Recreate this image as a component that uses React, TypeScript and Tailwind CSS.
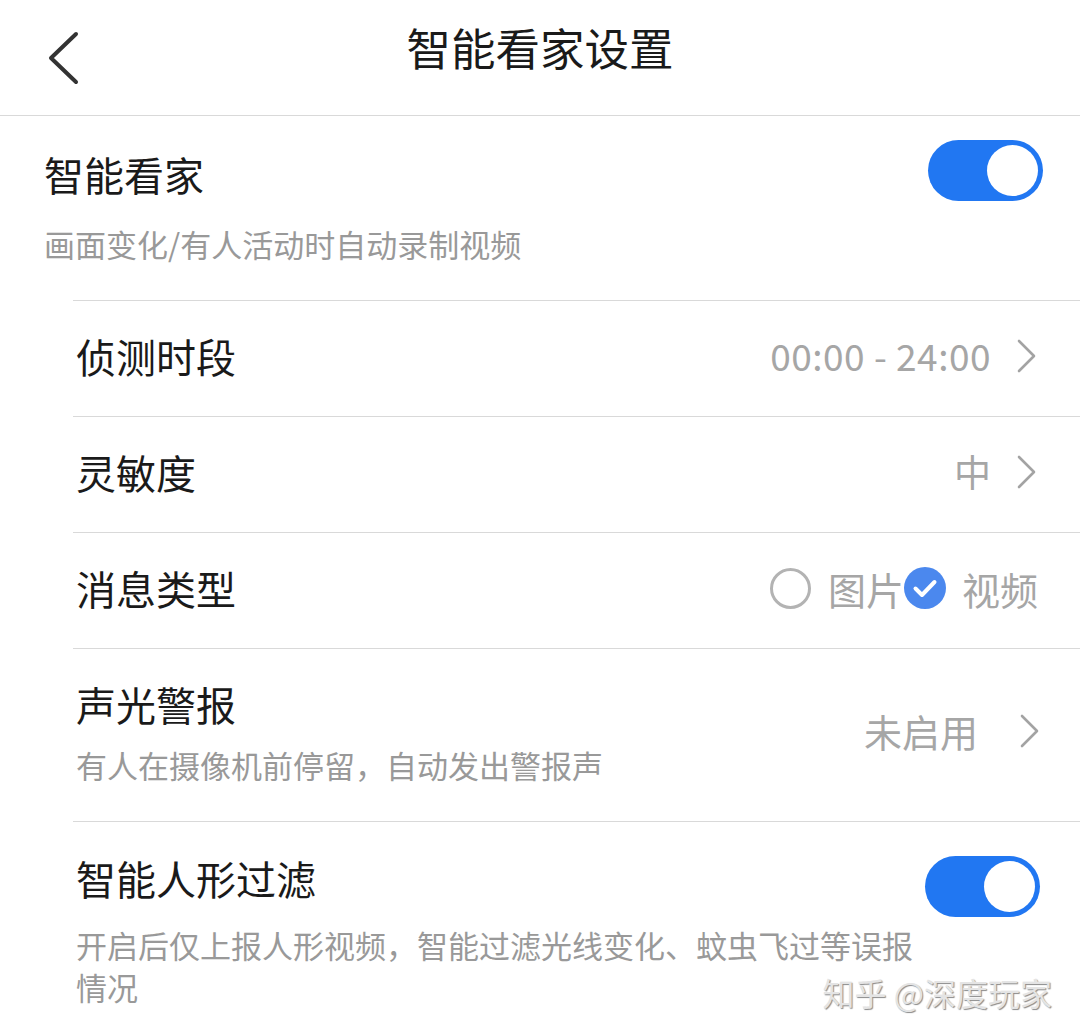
import React, { useState } from "react";

const FONT = '"Noto Sans CJK SC", "Noto Sans", sans-serif';

const Chevron: React.FC = () => (
  <svg width="20" height="34" viewBox="0 0 20 34" fill="none" className="shrink-0">
    <path d="M2 2 L17 17 L2 32" stroke="#a3a3a3" strokeWidth="2.6" strokeLinecap="round" strokeLinejoin="round" />
  </svg>
);

const Toggle: React.FC<{ on: boolean; onChange: () => void; className?: string }> = ({ on, onChange, className }) => (
  <button
    onClick={onChange}
    className={`w-[115px] h-[61px] rounded-full p-[5px] flex shrink-0 ${on ? "bg-[#2177f2] justify-end" : "bg-[#d9d9d9] justify-start"} ${className ?? ""}`}
  >
    <span className="w-[51px] h-[51px] rounded-full bg-white block" />
  </button>
);

const CheckedCircle: React.FC = () => (
  <svg width="42" height="42" viewBox="0 0 42 42" className="shrink-0">
    <circle cx="21" cy="21" r="21" fill="#4b88ee" />
    <path d="M11.5 21.5 L18 28 L30.5 15" stroke="#ffffff" strokeWidth="4" fill="none" strokeLinecap="round" strokeLinejoin="round" />
  </svg>
);

const EmptyCircle: React.FC = () => (
  <span className="w-[41px] h-[41px] rounded-full border-[3px] border-[#b3b3b3] block shrink-0" />
);

export default function App() {
  const [smartHome, setSmartHome] = useState(true);
  const [humanFilter, setHumanFilter] = useState(true);
  const [msgType, setMsgType] = useState<"image" | "video">("video");

  return (
    <div className="w-[1080px] h-[1036px] bg-white relative overflow-hidden text-[#1a1a1a]" style={{ fontFamily: FONT }}>
      {/* header */}
      <div className="h-[116px] border-b border-[#d9d9d9] grid grid-cols-[1fr_auto_1fr] items-center">
        <div className="pl-[46px] flex items-center">
          <svg width="34" height="54" viewBox="0 0 34 54" fill="none">
            <path d="M30 3 L5 27 L30 51" stroke="#333333" strokeWidth="4" strokeLinecap="round" strokeLinejoin="round" />
          </svg>
        </div>
        <h1 className="text-[44.5px] leading-[60px] pb-[22px]">智能看家设置</h1>
        <div />
      </div>

      {/* 智能看家 */}
      <div className="pl-[44px] pr-[37px] pt-[24px] pb-[36px]">
        <div className="flex items-start justify-between">
          <div className="text-[40px] leading-[56px] mt-[6px]">智能看家</div>
          <Toggle on={smartHome} onChange={() => setSmartHome((p) => !p)} />
        </div>
        <div className="text-[31px] leading-[40px] text-[#999999] mt-[22px]">画面变化/有人活动时自动录制视频</div>
      </div>

      <div className="ml-[73px]">
        {/* 侦测时段 */}
        <div className="h-[116px] border-t border-[#d9d9d9] flex items-center justify-between pl-[3px] pr-[43px] pb-[5px]">
          <div className="text-[40px] leading-[56px]">侦测时段</div>
          <div className="flex items-center gap-[26px]">
            <span className="text-[37px] tracking-[0.5px] text-[#a6a6a6]">00:00 - 24:00</span>
            <Chevron />
          </div>
        </div>

        {/* 灵敏度 */}
        <div className="h-[116px] border-t border-[#d9d9d9] flex items-center justify-between pl-[3px] pr-[43px] pb-[5px]">
          <div className="text-[40px] leading-[56px]">灵敏度</div>
          <div className="flex items-center gap-[26px]">
            <span className="text-[37px] text-[#a6a6a6]">中</span>
            <Chevron />
          </div>
        </div>

        {/* 消息类型 */}
        <div className="h-[116px] border-t border-[#d9d9d9] flex items-center justify-between pl-[3px] pr-[42px] pb-[5px]">
          <div className="text-[40px] leading-[56px]">消息类型</div>
          <div className="flex items-center text-[38px] text-[#a6a6a6]">
            <button onClick={() => setMsgType("image")} className="flex items-center">
              {msgType === "image" ? <CheckedCircle /> : <EmptyCircle />}
              <span className="ml-[17px]">图片</span>
            </button>
            <button onClick={() => setMsgType("video")} className="flex items-center">
              {msgType === "video" ? <CheckedCircle /> : <EmptyCircle />}
              <span className="ml-[16px]">视频</span>
            </button>
          </div>
        </div>

        {/* 声光警报 */}
        <div className="h-[173px] border-t border-[#d9d9d9] flex justify-between pl-[3px] pr-[40px]">
          <div className="flex flex-col gap-[13px] pt-[27px]">
            <div className="text-[40px] leading-[56px]">声光警报</div>
            <div className="text-[31px] leading-[40px] text-[#999999]">有人在摄像机前停留，自动发出警报声</div>
          </div>
          <div className="flex items-center gap-[42px] self-center mb-[9px]">
            <span className="text-[38px] text-[#a6a6a6]">未启用</span>
            <Chevron />
          </div>
        </div>

        {/* 智能人形过滤 */}
        <div className="border-t border-[#d9d9d9] flex items-start pl-[3px] pr-[40px] pt-[28px]">
          <div className="flex-1 flex flex-col gap-[18px]">
            <div className="text-[40px] leading-[56px]">智能人形过滤</div>
            <div className="text-[31px] leading-[42px] text-[#999999]">
              开启后仅上报人形视频，智能过滤光线变化、蚊虫飞过等误报情况
            </div>
          </div>
          <Toggle on={humanFilter} onChange={() => setHumanFilter((p) => !p)} className="mt-[6px]" />
        </div>
      </div>

      {/* watermark */}
      <div className="absolute right-[28px] bottom-[28px] text-[32px] leading-[32px] text-[#e4e4e4] [text-shadow:1px_1px_1px_#8a8a8a]">
        知乎 @深度玩家
      </div>
    </div>
  );
}
